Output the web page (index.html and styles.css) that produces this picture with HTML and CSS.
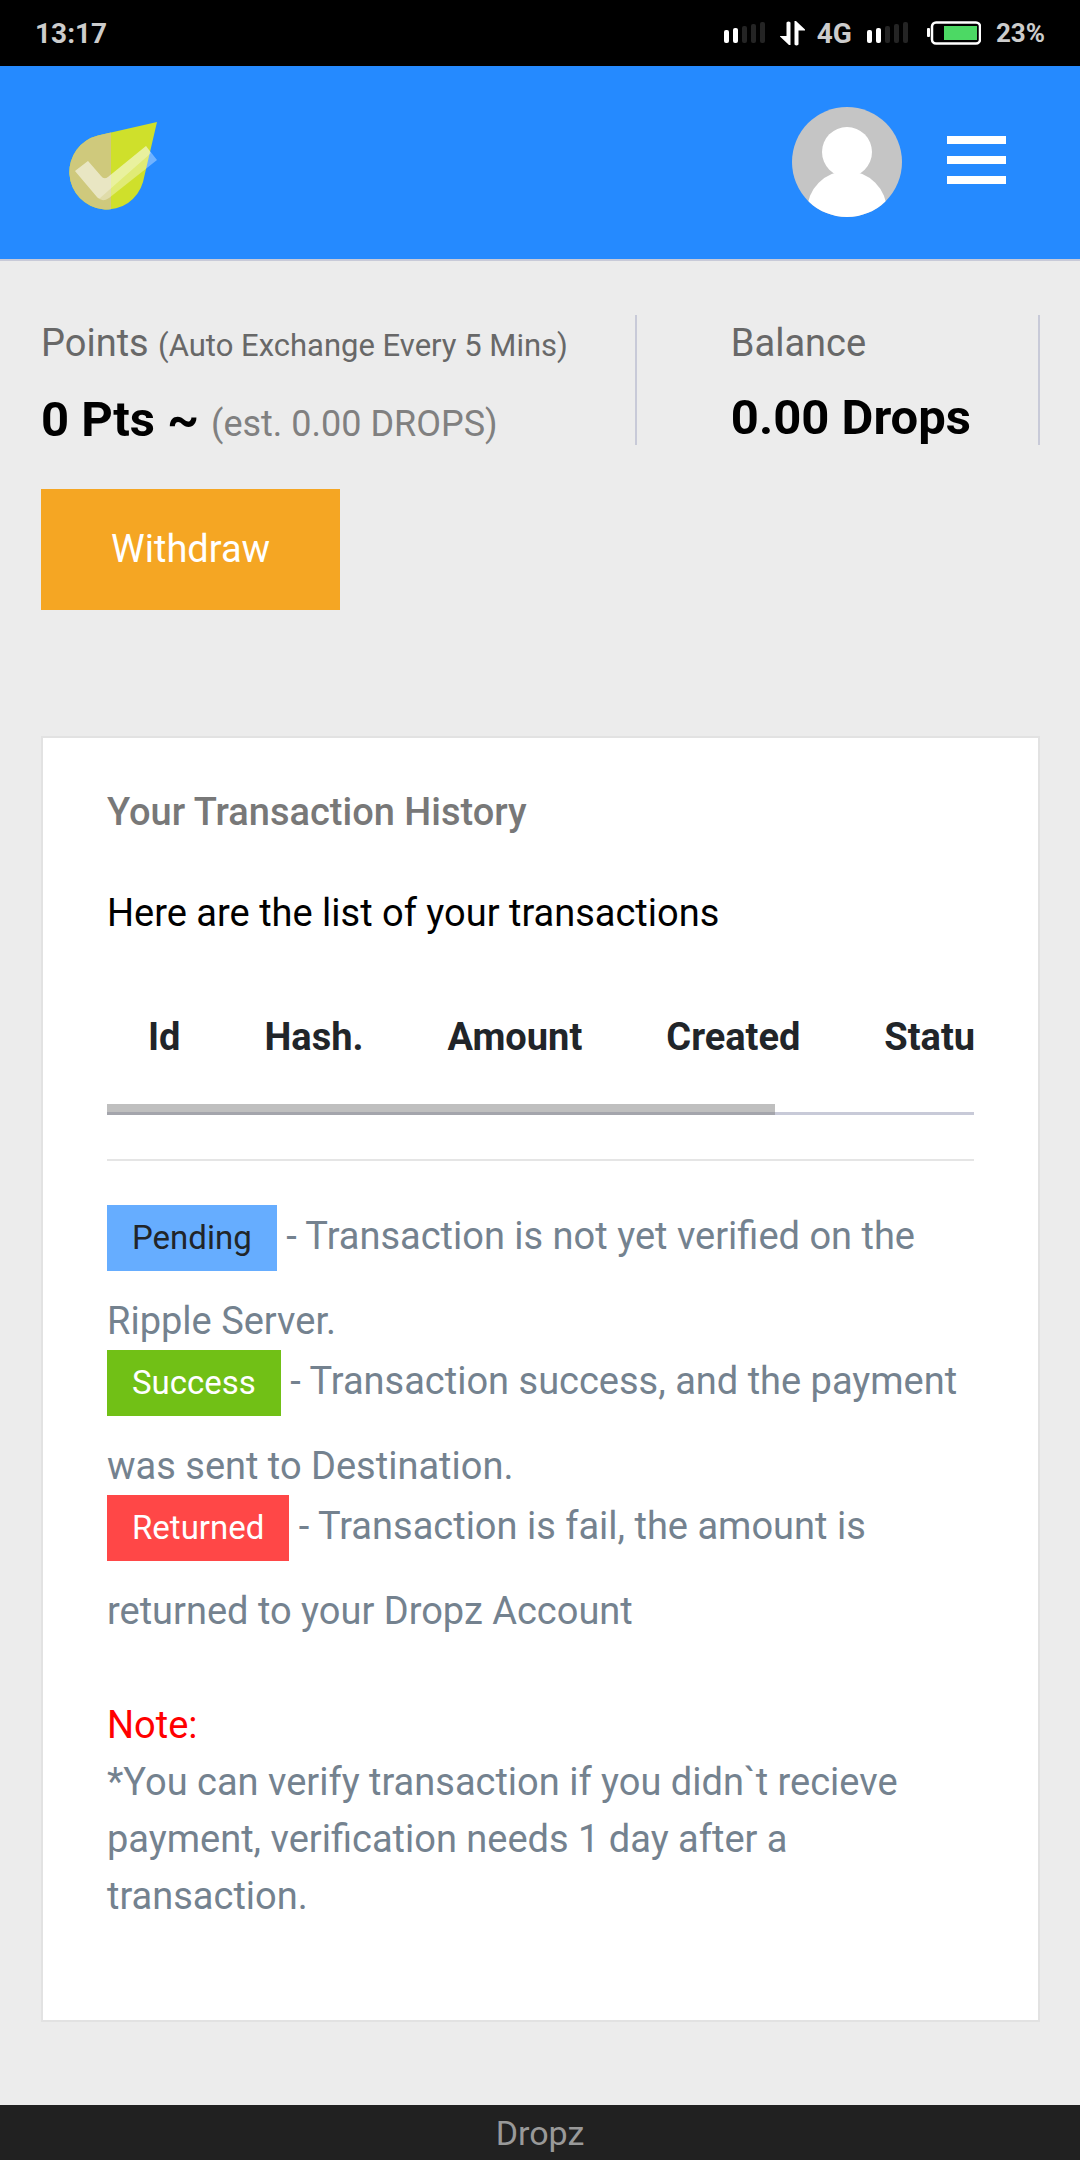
FILE: index.html
```html
<!DOCTYPE html>
<html lang="en">

<head>
    <meta charset="UTF-8">
    <meta name="viewport" content="width=device-width, initial-scale=1.0">
    <title>Dropz</title>
    <link rel="stylesheet" href="styles.css">
</head>

<body>
    <!-- Phone status bar -->
    <div class="status-bar">
        <span class="time">13:17</span>
        <div class="status-icons">
            <svg width="41" height="22" viewBox="0 0 41 22">
                <g fill="#fff">
                    <rect x="0" y="8" width="5" height="13" rx="2" />
                    <rect x="9" y="6" width="5" height="15" rx="2" />
                </g>
                <g fill="#242424">
                    <rect x="18" y="4" width="5" height="17" rx="2" />
                    <rect x="27" y="2" width="5" height="19" rx="2" />
                    <rect x="36" y="0" width="5" height="21" rx="2" />
                </g>
            </svg>
            <svg class="arrows" width="25" height="25" viewBox="0 0 25 25" fill="#fff">
                <path d="M6.500 1.500q2-2 4 0V24H9L0 15.500V15h6.500z" />
                <path d="M18.500 23.500q-2 2-4 0V0H16l9 8.500V9.500h-6.500z" />
            </svg>
            <span class="network">4G</span>
            <svg width="41" height="22" viewBox="0 0 41 22">
                <g fill="#fff">
                    <rect x="0" y="8" width="5" height="13" rx="2" />
                    <rect x="9" y="6" width="5" height="15" rx="2" />
                </g>
                <g fill="#242424">
                    <rect x="18" y="4" width="5" height="17" rx="2" />
                    <rect x="27" y="2" width="5" height="19" rx="2" />
                    <rect x="36" y="0" width="5" height="21" rx="2" />
                </g>
            </svg>
            <svg class="battery" width="54" height="24" viewBox="0 0 54 24">
                <rect x="0" y="7" width="3" height="9" rx="1" fill="#fff" />
                <rect x="5" y="1.500" width="48" height="21" rx="4" fill="none" stroke="#fff" stroke-width="2.500" />
                <rect x="17" y="5" width="33" height="14" fill="#4cd964" />
            </svg>
            <span class="percent">23%</span>
        </div>
    </div>

    <header class="header">
        <a class="logo" href="#" aria-label="Dropz">
            <svg width="90" height="90" viewBox="0 0 90 90">
                <clipPath id="left">
                    <rect x="0" y="0" width="42" height="90" />
                </clipPath>
                <path fill="#cfe02b" d="M88 2L29 15.500A37.500 37.500 0 1 0 74 62z" />
                <path fill="#cfc97c" clip-path="url(#left)" d="M88 2L29 15.500A37.500 37.500 0 1 0 74 62z" />
                <path fill="#fff" fill-opacity=".35" d="M6 51L19 41L32 56Q35 60 39 57L77 26L88 40L40 78Q33 83 28 77z" />
                <path fill="#fff" fill-opacity=".3" d="M6 51L19 41L32 56Q35 60 39 57L77 26L82 33L31 78Q29 79 28 77z" />
            </svg>
        </a>
        <div class="header-right">
            <svg class="avatar" width="110" height="110" viewBox="0 0 110 110">
                <clipPath id="round">
                    <circle cx="55" cy="55" r="55" />
                </clipPath>
                <g clip-path="url(#round)">
                    <rect width="110" height="110" fill="#c5c5c5" />
                    <circle cx="55" cy="45" r="25" fill="#fff" />
                    <circle cx="55" cy="104" r="40" fill="#fff" />
                </g>
            </svg>
            <button class="menu" aria-label="Menu">
                <span></span>
                <span></span>
                <span></span>
            </button>
        </div>
    </header>

    <main class="content">
        <section class="summary">
            <div class="stat">
                <p class="stat-label">Points <small>(Auto Exchange Every 5 Mins)</small></p>
                <p class="stat-value">0 Pts ~ <small>(est. 0.00 DROPS)</small></p>
            </div>
            <div class="stat">
                <p class="stat-label">Balance</p>
                <p class="stat-value">0.00 Drops</p>
            </div>
        </section>
        <button class="withdraw">Withdraw</button>

        <section class="card">
            <h2>Your Transaction History</h2>
            <p class="intro">Here are the list of your transactions</p>
            <div class="table-wrap">
                <table>
                    <thead>
                        <tr>
                            <th>Id</th>
                            <th>Hash.</th>
                            <th>Amount</th>
                            <th>Created</th>
                            <th>Status</th>
                        </tr>
                    </thead>
                </table>
            </div>
            <hr>
            <p><span class="badge pending">Pending</span> - Transaction is not yet verified on the Ripple Server.</p>
            <p><span class="badge success">Success</span> - Transaction success, and the payment was sent to Destination.</p>
            <p><span class="badge returned">Returned</span> - Transaction is fail, the amount is returned to your Dropz Account</p>
            <div class="note">
                <p class="note-title">Note:</p>
                <p>*You can verify transaction if you didn`t recieve payment, verification needs 1 day after a transaction.</p>
            </div>
        </section>
    </main>

    <footer class="footer">Dropz</footer>
</body>

</html>
```
FILE: styles.css
```css
* {
    box-sizing: border-box;
}

body {
    margin: 0;
    background-color: #ececec;
    color: #74828f;
    font-family: Roboto, "Liberation Sans", sans-serif;
    font-size: 38px;
    line-height: 57px;
    min-height: 100vh;
    display: flex;
    flex-direction: column;
}

p,
h2 {
    margin: 0;
}

button {
    border: none;
    font-family: inherit;
    font-size: inherit;
    cursor: pointer;
}

/* Status bar */
.status-bar {
    display: flex;
    justify-content: space-between;
    align-items: center;
    height: 66px;
    padding: 0 35px;
    background-color: #000;
    color: #ccc;
    font-size: 28px;
    font-weight: 700;
}

.status-icons {
    display: flex;
    align-items: center;
    gap: 15px;
}

.network {
    margin-left: -3px;
}

.battery {
    margin-left: 4px;
}

.percent {
    font-size: 26px;
}

/* Header */
.header {
    display: flex;
    justify-content: space-between;
    align-items: center;
    height: 195px;
    padding: 0 74px 2px 69px;
    background-color: #258aff;
    border-bottom: 2px solid #c8cad8;
}

.logo svg,
.avatar {
    display: block;
}

.logo {
    margin-top: 6px;
}

.header-right {
    display: flex;
    align-items: center;
    gap: 45px;
}

.menu {
    display: flex;
    flex-direction: column;
    gap: 12px;
    padding: 0 0 4px;
    background: none;
}

.menu span {
    width: 59px;
    height: 8px;
    background-color: #fff;
}

/* Summary */
.content {
    flex: 1;
    padding: 54px 40px 83px 41px;
}

.summary {
    display: flex;
    justify-content: space-between;
    margin-bottom: 44px;
}

.stat {
    height: 130px;
    border-right: 2px solid #c8cad8;
    padding-right: 67px;
}

.stat-label {
    color: #686868;
    margin-bottom: 13px;
}

.stat-label small {
    font-size: 31px;
}

.stat-value {
    color: #000;
    font-size: 49px;
    font-weight: 700;
    line-height: 66px;
}

.stat-value small {
    color: #808080;
    font-size: 36px;
    font-weight: 400;
}

.withdraw {
    display: block;
    padding: 32px 70px;
    background-color: #f5a623;
    color: #fff;
    line-height: 57px;
}

/* Transactions card */
.card {
    margin-top: 126px;
    padding: 46px 64px 95px;
    background-color: #fff;
    border: 2px solid #e2e2e2;
}

.card h2 {
    margin-bottom: 44px;
    color: #787878;
    font-size: 38px;
    font-weight: 500;
}

.intro {
    margin-bottom: 34px;
    color: #000;
}

.table-wrap {
    position: relative;
    overflow: hidden;
}

/* Scrollbar thumb lies over the bottom border of the table */
.table-wrap::after {
    content: "";
    position: absolute;
    left: 0;
    bottom: 0;
    width: 77%;
    height: 11px;
    background-color: rgba(128, 128, 128, 0.5);
}

table {
    border-collapse: collapse;
    color: #212529;
}

th {
    padding: 33px 43px 46px 41px;
    border-bottom: 3px solid #c8cad8;
    text-align: left;
    font-weight: 700;
}

hr {
    margin: 44px 0;
    border: none;
    border-top: 2px solid #e5e5e5;
}

.badge {
    display: inline-block;
    margin-bottom: 22px;
    padding: 0 25px;
    color: #fff;
    font-size: 33px;
    line-height: 66px;
}

.pending {
    background-color: #66adff;
    color: #212529;
}

.success {
    background-color: #71c016;
}

.returned {
    background-color: #ff4747;
}

.note {
    margin-top: 57px;
}

.note-title {
    color: #f00;
}

.footer {
    padding-top: 2px;
    background-color: #212121;
    color: #999;
    font-size: 34px;
    line-height: 53px;
    text-align: center;
}
```
